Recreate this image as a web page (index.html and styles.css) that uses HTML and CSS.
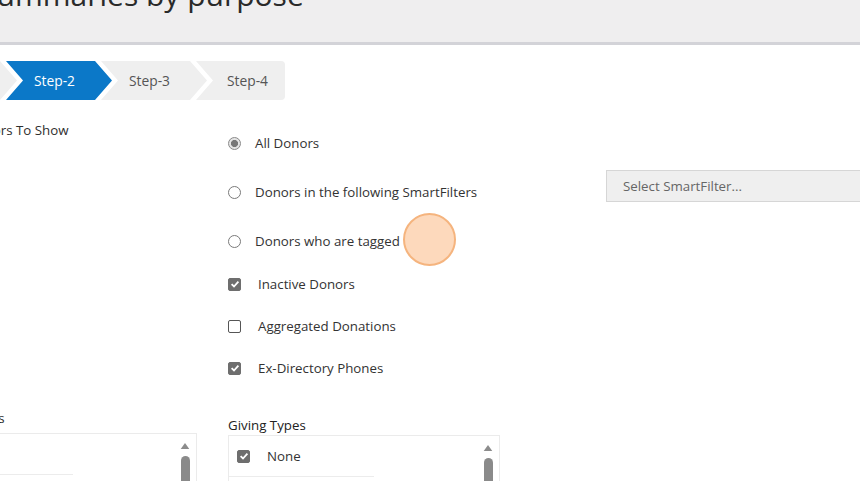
FILE: index.html
```html
<!DOCTYPE html>
<html lang="en">
<head>
<meta charset="utf-8">
<title>Donor summaries by purpose</title>
<link rel="stylesheet" href="styles.css">
</head>
<body>
<header class="header">
  <h1 class="title">Donor summaries by purpose</h1>
</header>
<nav class="steps">
  <div class="step">Step-1</div>
  <div class="step active">Step-2</div>
  <div class="step">Step-3</div>
  <div class="step last">Step-4</div>
</nav>
<main class="main">
  <section class="left-col">
    <div class="side-title">Donors To Show</div>
    <div class="side-label">Funds</div>
    <div class="listbox left-box">
      <ul class="items left-items">
        <li class="item"></li>
        <li class="item"></li>
      </ul>
      <div class="scrollbar">
        <svg class="arrow" width="10" height="7" viewBox="0 0 10 7"><path d="M0 7 L5 0 L10 7 Z" fill="#8c8c8c"/></svg>
        <div class="thumb"></div>
      </div>
    </div>
  </section>
  <section class="mid-col">
    <div class="radios">
      <label class="row"><span class="radio on"></span><span class="rlabel">All Donors</span></label>
      <label class="row"><span class="radio"></span><span class="rlabel">Donors in the following SmartFilters</span><span class="select">Select SmartFilter...</span></label>
      <label class="row"><span class="radio"></span><span class="rlabel">Donors who are tagged</span></label>
    </div>
    <div class="checks">
      <label class="row"><span class="check on"><svg width="12" height="12" viewBox="0 0 12 12"><path d="M2.6 6.2 L5 8.5 L9.4 3.6" fill="none" stroke="#fff" stroke-width="1.8"/></svg></span><span class="clabel">Inactive Donors</span></label>
      <label class="row"><span class="check"></span><span class="clabel">Aggregated Donations</span></label>
      <label class="row"><span class="check on"><svg width="12" height="12" viewBox="0 0 12 12"><path d="M2.6 6.2 L5 8.5 L9.4 3.6" fill="none" stroke="#fff" stroke-width="1.8"/></svg></span><span class="clabel">Ex-Directory Phones</span></label>
    </div>
    <div class="section-label">Giving Types</div>
    <div class="listbox giving-box">
      <ul class="items giving-items">
        <li class="item"><span class="check on"><svg width="12" height="12" viewBox="0 0 12 12"><path d="M2.6 6.2 L5 8.5 L9.4 3.6" fill="none" stroke="#fff" stroke-width="1.8"/></svg></span><span class="ilabel">None</span></li>
        <li class="item"></li>
      </ul>
      <div class="scrollbar">
        <svg class="arrow" width="10" height="7" viewBox="0 0 10 7"><path d="M0 7 L5 0 L10 7 Z" fill="#8c8c8c"/></svg>
        <div class="thumb"></div>
      </div>
    </div>
  </section>
</main>
<div class="cursor"></div>
</body>
</html>
```
FILE: styles.css
```css
* { box-sizing: border-box; }
html, body {
  margin: 0;
  padding: 0;
}
body {
  width: 860px;
  height: 481px;
  overflow: hidden;
  position: relative;
  background: #fff;
  font-family: "Open Sans", "DejaVu Sans", sans-serif;
  font-size: 13.3px;
  color: #333;
}
.header {
  height: 45px;
  background: #efeeef;
  border-bottom: 3px solid #d3d3d8;
  overflow: hidden;
}
.title {
  margin: -20px 0 0 -114px;
  font-size: 30px;
  line-height: 30px;
  font-weight: 400;
  color: #2a2a2a;
  white-space: nowrap;
}
.steps {
  display: flex;
  margin: 16px 0 0 -89px;
  height: 39px;
}
.step {
  flex: none;
  width: 106px;
  height: 39px;
  margin-left: -11px;
  padding-left: 28px;
  background: #efefef;
  color: #555;
  font-size: 13.8px;
  line-height: 39px;
  clip-path: polygon(0 0, 89px 0, 106px 50%, 89px 100%, 0 100%, 17px 50%);
}
.step:first-child { margin-left: 0; }
.step.active {
  background: #0b78c8;
  color: #fff;
}
.step.last {
  width: 89px;
  padding-left: 31px;
  border-radius: 0 4px 4px 0;
  clip-path: polygon(0 0, 100% 0, 100% 100%, 0 100%, 17px 50%);
}
.main {
  display: flex;
  margin-left: -40px;
}
.left-col {
  flex: none;
  width: 237px;
  padding-top: 20px;
}
.side-title {
  padding-left: 7px;
  line-height: 20px;
  color: #2e2e2e;
}
.side-label {
  margin-top: 268px;
  padding-left: 7px;
  line-height: 20px;
  color: #2e2e2e;
}
.listbox {
  display: flex;
  border: 1px solid #ebebeb;
  height: 80px;
}
.left-box { margin-top: 5px; }
.items {
  list-style: none;
  margin: 0;
  padding: 0;
  flex: 1;
}
.item {
  display: flex;
  align-items: center;
  height: 41px;
  border-bottom: 1px solid #ececec;
}
.left-items .item { width: 112px; }
.giving-items .item {
  width: 145px;
  padding-left: 8px;
}
.ilabel { margin-left: 17px; color: #333; }
.scrollbar {
  flex: none;
  width: 18px;
  display: flex;
  flex-direction: column;
  align-items: center;
  padding-top: 9px;
  padding-right: 4px;
}
.arrow { display: block; }
.thumb {
  margin-top: 7px;
  width: 9px;
  height: 60px;
  border-radius: 5px;
  background: #8a8a8a;
}
.mid-col {
  flex: none;
  width: 680px;
  margin-left: 31px;
  padding-top: 33px;
}
.radios {
  display: flex;
  flex-direction: column;
  gap: 29px;
}
.checks {
  display: flex;
  flex-direction: column;
  gap: 22px;
  margin-top: 23px;
}
.row {
  display: flex;
  align-items: center;
  height: 20px;
}
.radio {
  flex: none;
  width: 13px;
  height: 13px;
  border-radius: 50%;
  border: 1px solid #7a7a7a;
  background: #fff;
}
.radio.on {
  border-color: #8a8a8a;
  background: radial-gradient(circle, #777 0 3.3px, #e4e4e4 3.8px);
}
.rlabel {
  flex: none;
  width: 351px;
  margin-left: 14px;
  color: #333;
}
.check {
  flex: none;
  width: 13px;
  height: 13px;
  border: 1px solid #555;
  border-radius: 2px;
  background: #fff;
  display: flex;
  align-items: center;
  justify-content: center;
}
.check.on {
  background: #6e6e6e;
  border-color: #6e6e6e;
}
.check svg { display: block; flex: none; }
.clabel { margin-left: 17px; color: #333; }
.select {
  flex: none;
  align-self: flex-end;
  width: 270px;
  height: 32px;
  line-height: 30px;
  padding-left: 16px;
  background: #efefef;
  border: 1px solid #d6d6d6;
  color: #666;
}
.section-label {
  margin-top: 37px;
  line-height: 20px;
  color: #222;
}
.giving-box {
  width: 272px;
}
.cursor {
  position: absolute;
  left: 403px;
  top: 213px;
  width: 53px;
  height: 53px;
  border-radius: 50%;
  background: #fdd9bc;
  border: 2px solid #f5b47e;
}
```
